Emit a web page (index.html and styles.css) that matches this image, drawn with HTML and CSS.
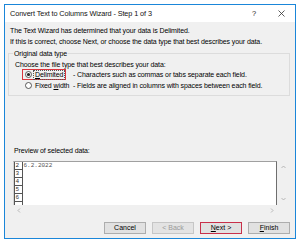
FILE: index.html
```html
<!DOCTYPE html>
<html>
<head>
<meta charset="utf-8">
<link rel="stylesheet" href="styles.css">
</head>
<body>
<div class="win">
  <div class="titlebar">
    <span class="title">Convert Text to Columns Wizard - Step 1 of 3</span>
    <span class="help">?</span>
    <span class="close"><svg width="7" height="7" viewBox="0 0 7 7"><path d="M0.5 0.5L6.5 6.5M6.5 0.5L0.5 6.5" stroke="#333" stroke-width="0.8"/></svg></span>
  </div>
  <div class="content">
    <p class="intro first">The Text Wizard has determined that your data is Delimited.</p>
    <p class="intro">If this is correct, choose Next, or choose the data type that best describes your data.</p>
    <fieldset class="group">
      <legend class="legend">Original data type</legend>
      <div class="choose">Choose the file type that best describes your data:</div>
      <div class="opt">
        <span class="opt-label selected">
          <svg class="radio" width="7" height="7" viewBox="0 0 7 7"><circle cx="3.5" cy="3.5" r="3" fill="#fff" stroke="#333" stroke-width="0.8"/><circle cx="3.5" cy="3.5" r="1.6" fill="#222"/></svg>
          <span class="focus"><u>D</u>elimited</span>
        </span>
        <span class="desc">- Characters such as commas or tabs separate each field.</span>
      </div>
      <div class="opt">
        <span class="opt-label">
          <svg class="radio" width="7" height="7" viewBox="0 0 7 7"><circle cx="3.5" cy="3.5" r="3" fill="#fff" stroke="#333" stroke-width="0.8"/></svg>
          <span class="plain">Fixed <u>w</u>idth</span>
        </span>
        <span class="desc">- Fields are aligned in columns with spaces between each field.</span>
      </div>
    </fieldset>
    <div class="preview-label">Preview of selected data:</div>
    <div class="preview">
      <div class="preview-top">
        <div class="preview-box">
          <div class="rownums">
            <div class="rn">2</div>
            <div class="rn">3</div>
            <div class="rn">4</div>
            <div class="rn">5</div>
            <div class="rn">6</div>
          </div>
          <div class="data">
            <div class="cell">6.2.2022</div>
          </div>
        </div>
        <div class="vscroll">
          <svg width="5" height="4" viewBox="0 0 5 4"><path d="M0.5 3L2.5 1L4.5 3" fill="none" stroke="#a8a8a8" stroke-width="0.8"/></svg>
          <svg width="5" height="4" viewBox="0 0 5 4"><path d="M0.5 1L2.5 3L4.5 1" fill="none" stroke="#a8a8a8" stroke-width="0.8"/></svg>
        </div>
      </div>
      <div class="hscroll">
        <svg width="4" height="5" viewBox="0 0 4 5"><path d="M3 0.5L1 2.5L3 4.5" fill="none" stroke="#a8a8a8" stroke-width="0.8"/></svg>
        <svg width="4" height="5" viewBox="0 0 4 5"><path d="M1 0.5L3 2.5L1 4.5" fill="none" stroke="#a8a8a8" stroke-width="0.8"/></svg>
      </div>
    </div>
    <div class="buttons">
      <button class="btn">Cancel</button>
      <button class="btn disabled">&lt; Back</button>
      <button class="btn next"><u>N</u>ext &gt;</button>
      <button class="btn"><u>F</u>inish</button>
    </div>
  </div>
</div>
</body>
</html>
```

FILE: styles.css
```css
* { box-sizing: border-box; }
html, body { margin: 0; padding: 0; background: #fff; }
body {
  font-family: "Liberation Sans", Arial, sans-serif;
  font-size: 7px;
  letter-spacing: -0.1px;
  color: #000;
}
.win {
  margin: 4px 0 0 4px;
  width: 292px;
  height: 235px;
  border: 1px solid #1a86d9;
  background: #f0f0f0;
  display: flex;
  flex-direction: column;
}
.titlebar {
  height: 17px;
  background: #fff;
  display: flex;
  align-items: center;
  padding-left: 5px;
}
.title { flex: 1; font-size: 7.3px; color: #111; }
.help { width: 8px; margin-right: 20px; text-align: center; font-size: 7.5px; color: #222; }
.close { width: 8px; margin-right: 9px; display: flex; align-items: center; }
.content { flex: 1; display: flex; flex-direction: column; }
.intro { margin: 0 0 0 5px; line-height: 11px; }
.intro.first { margin-top: 3px; }
.group {
  margin: 2px 0 0 3px;
  width: 282px;
  border: 1px solid #dcdcdc;
  padding: 0 0 4px 6px;
  min-width: 0;
}
.legend { padding: 0 1px; margin-left: -2px; line-height: 9px; }
.choose { line-height: 9px; margin-top: 2px; }
.opt { display: flex; align-items: center; height: 11px; }
.opt-label {
  display: flex;
  align-items: center;
  height: 11px;
  margin-left: 7px;
  width: 51px;
  padding-left: 3px;
}
.opt-label.selected {
  border: 1px solid #d9363e;
  width: 44px;
  margin-right: 7px;
  padding-left: 2px;
}
.radio { flex: none; margin-right: 2px; }
.focus { outline: 1px dotted #555; outline-offset: 0; line-height: 8px; padding: 0 1px; }
.plain { padding: 0 1px; }
.preview-label { margin: 50px 0 0 9px; line-height: 10px; }
.preview { margin: 5px 0 0 8px; width: 277px; }
.preview-top { display: flex; height: 44px; }
.preview-box {
  width: 264px;
  background: #fff;
  border-top: 1px solid #a0a0a0;
  border-right: 1px solid #6e6e6e;
  border-left: 1px solid #d4d4d4;
  display: flex;
}
.rownums {
  width: 9px;
  border-left: 1px solid #555;
  border-right: 1px solid #555;
  font-family: "Liberation Mono", "Courier New", monospace;
  font-size: 6px;
  letter-spacing: 0;
}
.rn {
  height: 8px;
  line-height: 7px;
  border-bottom: 1px solid #555;
  padding-left: 0.5px;
  color: #333;
}
.data {
  font-family: "Liberation Mono", "Courier New", monospace;
  font-size: 6px;
  letter-spacing: 0;
  color: #555;
  padding-left: 0.5px;
}
.cell { height: 8px; line-height: 7px; }
.vscroll {
  width: 13px;
  display: flex;
  flex-direction: column;
  justify-content: space-between;
  align-items: center;
  padding: 4px 0;
}
.hscroll {
  height: 10px;
  display: flex;
  justify-content: space-between;
  align-items: center;
  padding: 0 16px 0 4px;
}
.buttons {
  display: flex;
  justify-content: flex-end;
  gap: 6px;
  margin: 7px 5px 0 0;
}
.btn {
  width: 42px;
  height: 12px;
  padding: 0;
  background: #e1e1e1;
  border: 1px solid #adadad;
  font-family: "Liberation Sans", Arial, sans-serif;
  font-size: 7px;
  letter-spacing: 0;
  color: #000;
  line-height: 10px;
}
.btn.disabled { color: #9a9a9a; border-color: #c6c6c6; background: #e3e3e3; }
.btn.next { border: 1px solid #c8304a; }
```
